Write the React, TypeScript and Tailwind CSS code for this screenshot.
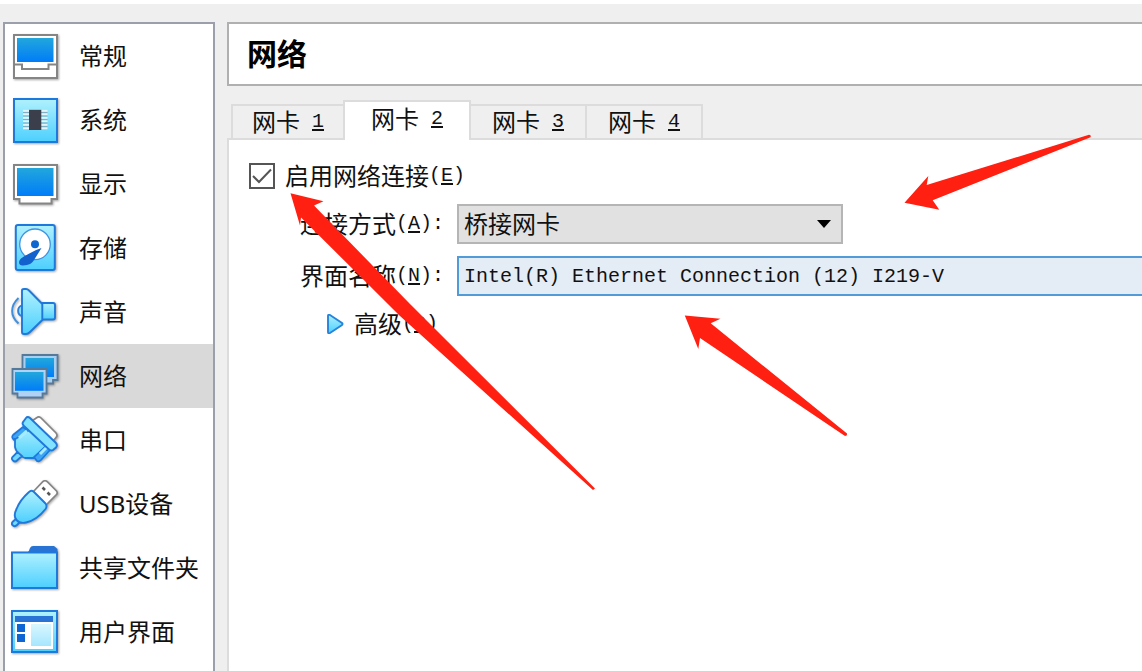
import { useState, type ReactNode } from "react";

const EDGE = "#1f78dc";

function Icon({ children }: { children: ReactNode }) {
  return (
    <svg viewBox="0 0 48 48" className="h-12 w-12 shrink-0 drop-shadow-[1px_1px_1px_rgba(0,0,0,0.35)]" fill="none" aria-hidden="true">
      {children}
    </svg>
  );
}

function Gradients() {
  return (
    <svg className="absolute h-0 w-0" aria-hidden="true">
      <defs>
        <linearGradient id="screen" x1="0" y1="0" x2="0" y2="1">
          <stop offset="0" stopColor="#22a7dc" />
          <stop offset="1" stopColor="#007cf8" />
        </linearGradient>
        <linearGradient id="sky" x1="0" y1="0" x2="0" y2="1">
          <stop offset="0" stopColor="#b0f1fe" />
          <stop offset="1" stopColor="#4ccffe" />
        </linearGradient>
        <linearGradient id="pale" x1="0" y1="0" x2="0" y2="1">
          <stop offset="0" stopColor="#d8f7ff" />
          <stop offset="1" stopColor="#a6e6ff" />
        </linearGradient>
      </defs>
    </svg>
  );
}

const GeneralIcon = () => (
  <Icon>
    <path d="M3 3H46V46H3Z" fill="#fff" stroke="#858585" strokeWidth="2" />
    <path d="M6 6H42.5V30H6Z" fill="url(#screen)" />
    <path d="M3 32.5H11V37H37.5V32.5H46" stroke="#858585" strokeWidth="2" />
  </Icon>
);

const SystemIcon = () => (
  <Icon>
    <path d="M3 3H46V46H3Z" fill="url(#sky)" stroke={EDGE} strokeWidth="2" />
    {[14.8, 18.3, 21.8, 25.3, 28.8, 32.3].map((y) => (
      <path key={y} d={`M12 ${y}H36.5`} stroke="#e4f4fb" strokeWidth="1.9" />
    ))}
    {[16.5, 20, 23.5, 27, 30.5].map((y) => (
      <path key={y} d={`M12 ${y}H36.5`} stroke="#7fa9bd" strokeWidth="0.9" />
    ))}
    <path d="M18 13.8H30.3V34H18Z" fill="#3a3f4b" />
  </Icon>
);

const DisplayIcon = () => (
  <Icon>
    <path d="M3 5H46V39H40.5V43.5H8.5V39H3Z" fill="#fff" stroke="#858585" strokeWidth="2" />
    <path d="M6 8H42.5V36H6Z" fill="url(#screen)" />
  </Icon>
);

const StorageIcon = () => (
  <Icon>
    <rect x="4.8" y="1" width="39" height="45" rx="2.2" fill="url(#sky)" stroke={EDGE} strokeWidth="2" />
    <circle cx="24" cy="20.3" r="15.3" fill="#fff" stroke="#3d93e4" strokeWidth="1.3" />
    <circle cx="24" cy="20.3" r="4" fill="#0d67cf" />
    <path d="M30.5 24C24 26 14 31.500 10 34.500C6.500 38 8 41.800 12 41.500C18 41 21 39.500 23 36Z" fill="#1261cc" />
  </Icon>
);

const AudioIcon = () => (
  <Icon>
    <path d="M7.500 10C-1 18 -1 28 7.500 35.500" stroke="#3f8ede" strokeWidth="1.900" />
    <path d="M10.500 17.500C6 19.500 6 26 10.500 28" fill="#8adffe" stroke="#2c80da" strokeWidth="1.900" />
    <path d="M31 15H42Q44 15 44 17V29.500Q44 31.500 42 31.500H31Z" fill="url(#sky)" stroke={EDGE} strokeWidth="1.900" />
    <path d="M11 2.500Q11 1 13 1H15Q16.500 1 18 2.500L31.300 16V32L19 44Q17 46 15 46H13Q11 46 11 44Z" fill="url(#sky)" stroke={EDGE} strokeWidth="1.900" />
  </Icon>
);

const NetworkIcon = () => (
  <Icon>
    <path d="M11.500 3H46.500V28H42V31.500H16V27H11.500Z" fill="#a9cff0" stroke="#557999" strokeWidth="1.800" />
    <path d="M14.500 6H43V25H14.500Z" fill="url(#screen)" />
    <path d="M1.500 17H35.500V41.500H31.500V45.500H6.500V41.500H1.500Z" fill="#b0d3f5" stroke="#557999" strokeWidth="1.800" />
    <path d="M4 20H32.500V38.800H4Z" fill="url(#screen)" />
  </Icon>
);

const SerialIcon = () => (
  <Icon>
    <path d="M21 5L26 1.500Q28 0 30 2L45 17Q47 19.500 45 21.500L42 25Z" fill="#fff" stroke="#868686" strokeWidth="1.700" />
    <path d="M9 36L4.500 32.500V18L16 9L42 34L34 42Q22 47 13 41Z" fill="url(#sky)" />
    <path d="M12 11L2 19Q0 21 3 24L17 15Z" fill="#3ca5f4" stroke={EDGE} strokeWidth="1.700" />
    <path d="M35 30L23 41L26 45Q28 46 30 44L39 34Z" fill="#3ca5f4" stroke={EDGE} strokeWidth="1.700" />
    <path d="M4 22V31Q4.500 34 7 37Q10 41 14 42H24" stroke={EDGE} strokeWidth="1.800" />
    <path d="M6.500 36L1.500 41Q0 43 2 44.500Q4 46.500 6 44.500L11 40Z" fill="#72d9fd" stroke={EDGE} strokeWidth="1.800" />
    <path d="M12.500 5.500L15 2Q16.500 0 19 2L44.500 26.500Q47 29 45 31.500L42 34Q40 35.500 37.500 33L13 10Q10.500 7.500 12.500 5.500Z" fill="#83e2ff" stroke={EDGE} strokeWidth="1.900" />
    <path d="M8 22L16 15M29 38L35 32" stroke="#a5ecff" strokeWidth="3" />
  </Icon>
);

const UsbIcon = () => (
  <Icon>
    <path d="M22 12L32 1.500Q34 0 36 1.500L45.500 11Q47 13 45.500 14.500L35 25Z" fill="#fff" stroke="#858585" strokeWidth="1.700" />
    <path d="M31.500 7.500L34 10M36.500 12.500L39 15" stroke="#555" strokeWidth="2.600" />
    <path d="M6 38L1.500 42Q0 44 2 45.500Q4 47 6 45L10 41Z" fill="#70d9fe" stroke={EDGE} strokeWidth="1.900" />
    <path d="M18 12Q20.500 9.500 23 12L34.500 23.500Q36.500 26 34.500 29Q26 40 15 42.500Q9 44 5.500 40Q2 36 5.500 29Q9 20 18 12Z" fill="url(#sky)" stroke={EDGE} strokeWidth="1.900" />
  </Icon>
);

const FolderIcon = () => (
  <Icon>
    <path d="M16 9Q18 8 19 4Q20 2 22 2H43L46.500 5V12H16Z" fill="#2873d3" />
    <path d="M1 8.500H46V44H1Z" fill="url(#sky)" stroke={EDGE} strokeWidth="2" />
  </Icon>
);

const InterfaceIcon = () => (
  <Icon>
    <path d="M1 3H46V44H1Z" fill="url(#sky)" stroke={EDGE} strokeWidth="2" />
    <path d="M4 8H42V41H4Z" fill="#fff" />
    <path d="M4 8H42V14H4Z" fill="#2873d3" />
    <path d="M6 16H14V24H6ZM6 26H14V34H6Z" fill="#0e66d4" />
    <path d="M20 16H40V38H20Z" fill="url(#pale)" />
  </Icon>
);

const sections = [
  { name: "常规", Glyph: GeneralIcon },
  { name: "系统", Glyph: SystemIcon },
  { name: "显示", Glyph: DisplayIcon },
  { name: "存储", Glyph: StorageIcon },
  { name: "声音", Glyph: AudioIcon },
  { name: "网络", Glyph: NetworkIcon },
  { name: "串口", Glyph: SerialIcon },
  { name: "USB设备", Glyph: UsbIcon },
  { name: "共享文件夹", Glyph: FolderIcon },
  { name: "用户界面", Glyph: InterfaceIcon },
];

const tabs = [
  { key: "1", width: "w-28" },
  { key: "2", width: "w-32" },
  { key: "3", width: "w-[116px]" },
  { key: "4", width: "w-[116px]" },
];

function Mono({ children }: { children: ReactNode }) {
  return <span className="font-['Liberation_Mono',monospace] text-xl leading-6 whitespace-pre">{children}</span>;
}

function Key({ letter, before = "", after = "" }: { letter: string; before?: string; after?: string }) {
  return (
    <Mono>
      {before}
      <u className="underline decoration-2 underline-offset-2">{letter}</u>
      {after}
    </Mono>
  );
}

function Sidebar({ current, onSelect }: { current: string; onSelect: (name: string) => void }) {
  return (
    <nav className="w-[212px] shrink-0 border-2 border-b-0 border-[#9a9fab] bg-white">
      {sections.map(({ name, Glyph }) => (
        <button
          key={name}
          type="button"
          onClick={() => onSelect(name)}
          className={`flex h-16 w-full items-center gap-5 pl-1.5 text-left text-2xl whitespace-nowrap ${current === name ? "bg-[#d9d9d9]" : "bg-white"}`}
        >
          <Glyph />
          <span>{name}</span>
        </button>
      ))}
    </nav>
  );
}

function Arrows() {
  return (
    <svg className="pointer-events-none absolute -top-1 left-0" width="1142" height="671" viewBox="0 0 1142 671" fill="#ff2012" aria-hidden="true">
      <path d="M290.500 193.300L323.500 201.300L314 205.500L410 304L595 488.500L593 490L400 316L301 217.500L300 225.500Z" />
      <path d="M904.500 202.800L928.300 176L926.700 185L1089 134.800Q1091.500 135 1090.500 137.200L932.700 200.300L939.300 209.700Z" />
      <path d="M684.800 315.500L720.500 318.800L710.700 323.300L847 433.500Q847.500 436 845 436L700 338L698.300 349Z" />
    </svg>
  );
}

export default function App() {
  const [section, setSection] = useState("网络");
  const [tab, setTab] = useState("2");
  const [enabled, setEnabled] = useState(true);

  return (
    <div className="relative flex min-h-screen flex-col overflow-hidden border-t-4 border-white bg-[#efefef] font-['Noto_Sans','Noto_Sans_CJK_SC',sans-serif] text-[#111]">
      <Gradients />
      <div className="flex flex-1 gap-3 pt-[18px] pl-[3px]">
        <Sidebar current={section} onSelect={setSection} />

        <main className="flex min-w-0 flex-1 flex-col">
          <header className="flex h-16 items-center border-2 border-r-0 border-[#b0b0b0] bg-white pb-1 pl-[18px]">
            <h1 className="font-['Noto_Sans_CJK_SC',sans-serif] text-3xl font-bold text-black">{section}</h1>
          </header>

          <div className="mt-[14px] flex items-end pl-1" role="tablist">
            {tabs.map(({ key, width }, i) => {
              const active = tab === key;
              return (
                <button
                  key={key}
                  type="button"
                  role="tab"
                  aria-selected={active}
                  onClick={() => setTab(key)}
                  className={`flex items-center justify-center ${width} ${active ? "z-10 -mb-0.5 h-10 border-x-2 bg-white pb-1" : "h-[34px] bg-[#efefef]"} ${!active && i === 0 ? "border-l-2" : ""} ${!active && i > 1 ? "border-r-2" : ""} border-t-2 border-[#dcdcdc] text-2xl leading-8 whitespace-nowrap`}
                >
                  网卡<Key before=" " letter={key} />
                </button>
              );
            })}
          </div>

          <section className="flex flex-1 flex-col border-t-2 border-l-2 border-[#dcdcdc] bg-white pt-5 pl-5 text-2xl leading-8">
            <div className="flex h-8 items-center gap-2.5">
              <span className="grid h-[26px] w-[26px] place-items-center">
                <input
                  id="enable"
                  type="checkbox"
                  checked={enabled}
                  onChange={(e) => setEnabled(e.target.checked)}
                  className="col-start-1 row-start-1 h-[26px] w-[26px] appearance-none border-2 border-[#555] bg-white"
                />
                {enabled && (
                  <svg viewBox="0 0 26 26" className="pointer-events-none col-start-1 row-start-1 h-[26px] w-[26px]" fill="none" aria-hidden="true">
                    <path d="M4 13L10 19L22 6.500" stroke="#555" strokeWidth="2" />
                  </svg>
                )}
              </span>
              <label htmlFor="enable" className="flex items-center">
                启用网络连接<Key before="(" letter="E" after=")" />
              </label>
            </div>

            <div className="mt-3 flex h-10 items-center pl-[51px]">
              <label htmlFor="attach" className="flex w-[157px] shrink-0 items-center">
                连接方式<Key before="(" letter="A" after="):" />
              </label>
              <div className="grid w-[386px] items-center">
                <select id="attach" className="col-start-1 row-start-1 h-10 w-full appearance-none border-2 border-[#b5b5b5] bg-[#e1e1e1] pl-[5px] text-2xl">
                  <option>桥接网卡</option>
                </select>
                <svg viewBox="0 0 14 8" className="pointer-events-none col-start-1 row-start-1 mr-3 h-2 w-3.5 justify-self-end" aria-hidden="true">
                  <path d="M0 0H14L7 8Z" fill="#000" />
                </svg>
              </div>
            </div>

            <div className="mt-3 flex h-10 items-center pl-[51px]">
              <label htmlFor="adapter" className="flex w-[157px] shrink-0 items-center">
                界面名称<Key before="(" letter="N" after="):" />
              </label>
              <select
                id="adapter"
                className="h-10 min-w-0 flex-1 appearance-none border-2 border-r-0 border-[#519bd8] bg-[#e4ecf6] pt-0.5 pl-[5px] font-['Liberation_Mono',monospace] text-xl"
              >
                <option>Intel(R) Ethernet Connection (12) I219-V</option>
              </select>
            </div>

            <button type="button" className="mt-3 flex h-8 items-center gap-2.5 self-start pl-[77px]">
              <svg viewBox="0 0 18 20" className="h-5 w-[18px]" aria-hidden="true">
                <path d="M2 2Q2 0 4 1L16 9Q17 10 16 11L4 19Q2 20 2 18Z" fill="url(#sky)" stroke="#2684dd" strokeWidth="1.900" />
              </svg>
              <span className="flex items-center">
                高级<Key before="(" letter="D" after=")" />
              </span>
            </button>
          </section>
        </main>
      </div>
      <Arrows />
    </div>
  );
}
